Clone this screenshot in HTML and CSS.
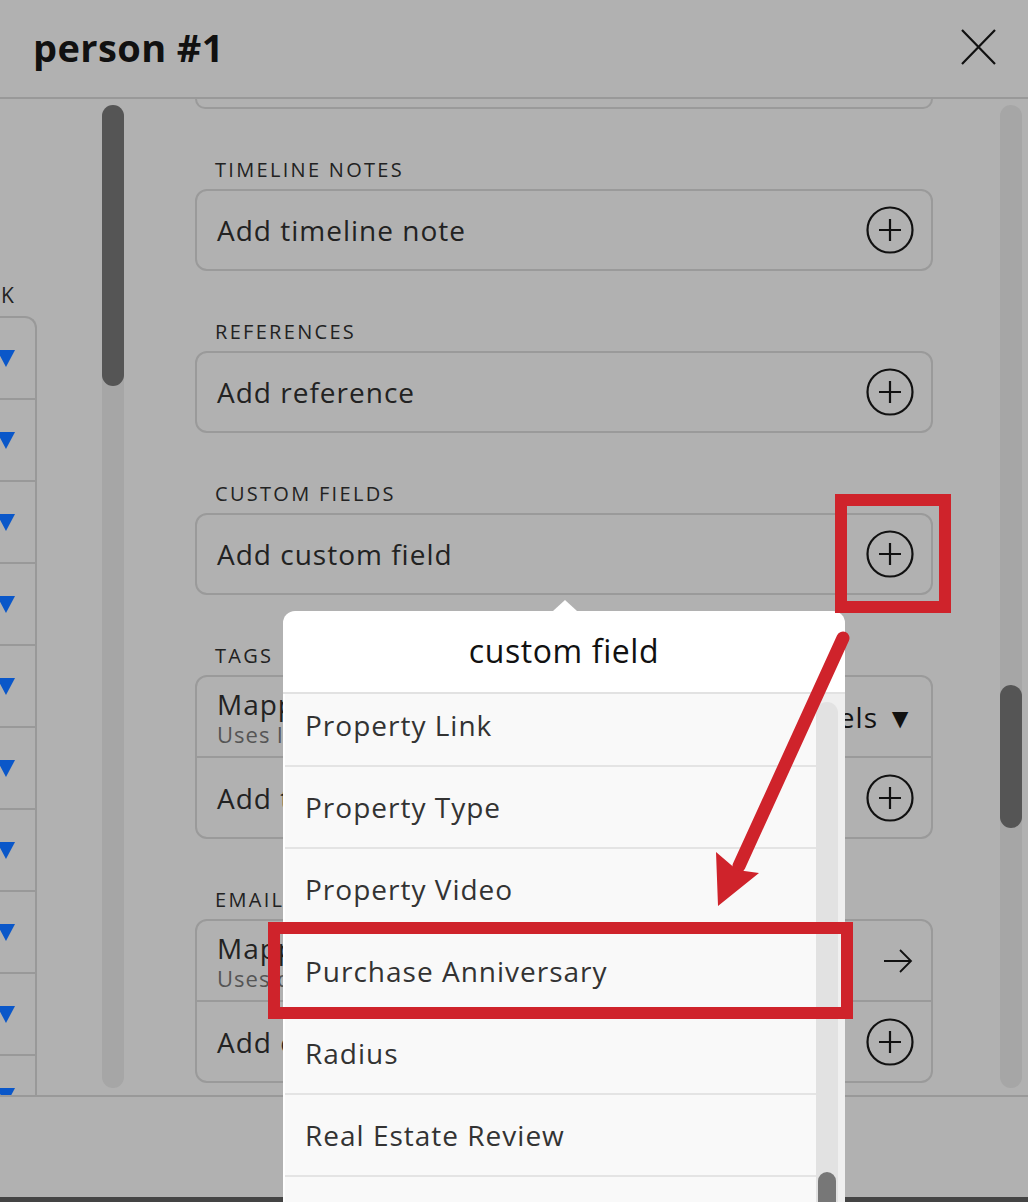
FILE: index.html
```
<!DOCTYPE html>
<html lang="en">
<head>
    <meta charset="UTF-8">
    <meta name="viewport" content="width=device-width, initial-scale=1.0">
    <title>person #1</title>
    <link rel="stylesheet" href="styles.css">
</head>
<body>
    <div class="modal">
        <header class="modal-head">
            <h1 class="title">person #1</h1>
            <svg class="close" width="36" height="36" viewBox="0 0 36 36"><path d="M2 1 L35 35 M35 1 L2 35" stroke="#111" stroke-width="2.2" fill="none"/></svg>
        </header>
        <div class="modal-body">
            <div class="side">
                <div class="side-label">K</div>
                <ul class="side-list">
                    <li><span class="tri"></span></li>
                    <li><span class="tri"></span></li>
                    <li><span class="tri"></span></li>
                    <li><span class="tri"></span></li>
                    <li><span class="tri"></span></li>
                    <li><span class="tri"></span></li>
                    <li><span class="tri"></span></li>
                    <li><span class="tri"></span></li>
                    <li><span class="tri"></span></li>
                    <li><span class="tri"></span></li>
                </ul>
            </div>
            <div class="track track-left"><div class="thumb"></div></div>
            <div class="fields">
                <div class="box box-cut"></div>

                <div class="section">
                    <div class="label">TIMELINE NOTES</div>
                    <div class="box">
                        <div class="row"><span>Add timeline note</span><svg class="plus" width="50" height="50" viewBox="0 0 50 50"><circle cx="25" cy="25" r="22.5" stroke="#111" stroke-width="2.2" fill="none"/><path d="M25 14 V36 M14 25 H36" stroke="#111" stroke-width="2.2"/></svg></div>
                    </div>
                </div>

                <div class="section">
                    <div class="label">REFERENCES</div>
                    <div class="box">
                        <div class="row"><span>Add reference</span><svg class="plus" width="50" height="50" viewBox="0 0 50 50"><circle cx="25" cy="25" r="22.5" stroke="#111" stroke-width="2.2" fill="none"/><path d="M25 14 V36 M14 25 H36" stroke="#111" stroke-width="2.2"/></svg></div>
                    </div>
                </div>

                <div class="section">
                    <div class="label">CUSTOM FIELDS</div>
                    <div class="box">
                        <div class="row"><span>Add custom field</span><svg class="plus" width="50" height="50" viewBox="0 0 50 50"><circle cx="25" cy="25" r="22.5" stroke="#111" stroke-width="2.2" fill="none"/><path d="M25 14 V36 M14 25 H36" stroke="#111" stroke-width="2.2"/></svg></div>
                    </div>
                </div>

                <div class="section">
                    <div class="label">TAGS</div>
                    <div class="box">
                        <div class="row row-tall">
                            <div class="two-line"><span>Mapping</span><small>Uses labels from source</small></div>
                            <span class="pick">Select labels &#9660;</span>
                        </div>
                        <div class="row row-tall"><span>Add tag</span><svg class="plus" width="50" height="50" viewBox="0 0 50 50"><circle cx="25" cy="25" r="22.5" stroke="#111" stroke-width="2.2" fill="none"/><path d="M25 14 V36 M14 25 H36" stroke="#111" stroke-width="2.2"/></svg></div>
                    </div>
                </div>

                <div class="section">
                    <div class="label">EMAIL ADDRESSES</div>
                    <div class="box">
                        <div class="row row-tall">
                            <div class="two-line"><span>Mapping</span><small>Uses default mapping</small></div>
                            <svg class="arrow" width="30" height="24" viewBox="0 0 30 24"><path d="M1 12 H28 M17 1 L28 12 L17 23" stroke="#111" stroke-width="1.8" fill="none"/></svg>
                        </div>
                        <div class="row row-tall"><span>Add email</span><svg class="plus" width="50" height="50" viewBox="0 0 50 50"><circle cx="25" cy="25" r="22.5" stroke="#111" stroke-width="2.2" fill="none"/><path d="M25 14 V36 M14 25 H36" stroke="#111" stroke-width="2.2"/></svg></div>
                    </div>
                </div>
            </div>
            <div class="track track-right"><div class="thumb"></div></div>
        </div>
        <footer class="modal-foot"></footer>
    </div>

    <!-- dropdown opened from the custom field plus -->
    <div class="popover">
        <div class="pop-head">custom field</div>
        <div class="pop-body">
            <div class="pop-items">
                <ul class="pop-list">
                    <li>Property Link</li>
                    <li>Property Type</li>
                    <li>Property Video</li>
                    <li>Purchase Anniversary</li>
                    <li>Radius</li>
                    <li>Real Estate Review</li>
                    <li></li>
                </ul>
            </div>
            <div class="pop-scroll"><div class="pop-track"><div class="pop-thumb"></div></div></div>
        </div>
    </div>

    <!-- annotation marks -->
    <svg class="marks" width="1028" height="1202" viewBox="0 0 1028 1202">
        <rect x="841" y="500" width="104" height="107" fill="none" stroke="#cf232b" stroke-width="12"/>
        <rect x="274" y="928" width="573" height="85" fill="none" stroke="#cf232b" stroke-width="12"/>
        <line x1="843" y1="638" x2="739" y2="866" stroke="#cf232b" stroke-width="13" stroke-linecap="round"/>
        <polygon points="718,906 716,852 737,870 759,873" fill="#cf232b"/>
    </svg>
</body>
</html>
```
FILE: styles.css
```
* {
    box-sizing: border-box;
}
body {
    margin: 0;
    width: 1028px;
    height: 1202px;
    overflow: hidden;
    position: relative;
    background: #b1b1b1;
    font-family: "Open Sans", "Liberation Sans", sans-serif;
    color: #222;
}
.modal {
    height: 1202px;
    display: flex;
    flex-direction: column;
}
.modal-head {
    height: 99px;
    flex: none;
    border-bottom: 2px solid #999;
    display: flex;
    align-items: center;
    justify-content: space-between;
    padding: 0 32px 0 33px;
}
.title {
    margin: 0 0 4px;
    font-size: 38px;
    font-weight: 700;
    color: #111;
    letter-spacing: 0.4px;
}
.close {
    margin-bottom: 3px;
}
.modal-body {
    flex: 1;
    display: flex;
    min-height: 0;
    overflow: hidden;
}
.modal-foot {
    height: 107px;
    flex: none;
    border-top: 2px solid #999;
    border-bottom: 5px solid #444;
}

/* left list, cut off by the window */
.side {
    width: 37px;
    flex: none;
    overflow: hidden;
}
.side-label {
    margin-top: 184px;
    height: 24px;
    line-height: 24px;
    font-size: 21px;
    margin-bottom: 9px;
    padding-left: 1px;
}
.side-list {
    list-style: none;
    margin: 0;
    padding: 0;
    width: 37px;
    border-top: 2px solid #999;
    border-right: 2px solid #999;
    border-top-right-radius: 12px;
}
.side-list li {
    height: 82px;
    border-bottom: 2px solid #999;
    display: flex;
    align-items: center;
}
.tri {
    width: 0;
    height: 0;
    margin-left: -3px;
    border-left: 9px solid transparent;
    border-right: 9px solid transparent;
    border-top: 17px solid #0a57c9;
}

/* scrollbars */
.track {
    width: 22px;
    flex: none;
    margin: 6px 0 7px;
    background: #a6a6a6;
    border-radius: 11px;
}
.track-left {
    margin-left: 65px;
}
.track-left .thumb {
    height: 281px;
}
.track-right {
    margin-left: 67px;
}
.track-right .thumb {
    margin-top: 580px;
    height: 143px;
}
.thumb {
    background: #555;
    border-radius: 11px;
}

/* form fields */
.fields {
    width: 738px;
    flex: none;
    margin-left: 71px;
}
.box {
    border: 2px solid #9a9a9a;
    border-radius: 12px;
}
.box-cut {
    height: 10px;
    border-top: none;
    border-radius: 0 0 12px 12px;
}
.section {
    margin-top: 49px;
}
.label {
    height: 24px;
    line-height: 24px;
    font-size: 20px;
    letter-spacing: 2.3px;
    margin-bottom: 7px;
    padding-left: 20px;
    color: #222;
}
.row {
    height: 78px;
    display: flex;
    align-items: center;
    justify-content: space-between;
    padding: 0 16px 0 20px;
    font-size: 28px;
    letter-spacing: 1px;
}
.row-tall {
    height: 79px;
}
.row + .row {
    height: 81px;
    border-top: 2px solid #9a9a9a;
}
.two-line {
    display: flex;
    flex-direction: column;
}
.two-line span {
    line-height: 34px;
}
.two-line small {
    font-size: 22px;
    line-height: 26px;
    color: #555;
}
.pick {
    color: #111;
}
.arrow {
    margin-right: 2px;
}

/* dropdown */
.popover {
    position: absolute;
    left: 283px;
    top: 611px;
    width: 562px;
    height: 591px;
    overflow: visible;
    background: #fff;
    border-radius: 12px 12px 0 0;
}
.popover::before {
    content: "";
    position: absolute;
    left: 270px;
    top: -11px;
    border-left: 12px solid transparent;
    border-right: 12px solid transparent;
    border-bottom: 11px solid #fff;
}
.pop-head {
    height: 83px;
    border-bottom: 2px solid #e2e2e2;
    text-align: center;
    font-size: 32px;
    line-height: 80px;
    letter-spacing: 0.6px;
    color: #111;
}
.pop-body {
    display: flex;
    height: 508px;
    overflow: hidden;
}
.pop-items {
    flex: 1;
    overflow: hidden;
    background: #f9f9f9;
    border-left: 2px solid #fff;
}
.pop-list {
    list-style: none;
    margin: -9px 0 0;
    padding: 0;
}
.pop-list li {
    height: 82px;
    line-height: 80px;
    border-bottom: 2px solid #e4e4e4;
    padding-left: 20px;
    font-size: 28px;
    letter-spacing: 1px;
    color: #333;
}
.pop-scroll {
    width: 29px;
    flex: none;
    background: #efefef;
    padding-right: 7px;
}
.pop-track {
    margin-top: 8px;
    height: 500px;
    background: #e2e2e2;
    border-radius: 11px 11px 0 0;
    padding: 0 2px;
    overflow: hidden;
}
.pop-thumb {
    margin-top: 470px;
    height: 40px;
    background: #777;
    border-radius: 9px;
}
.marks {
    position: absolute;
    left: 0;
    top: 0;
    pointer-events: none;
}
```
